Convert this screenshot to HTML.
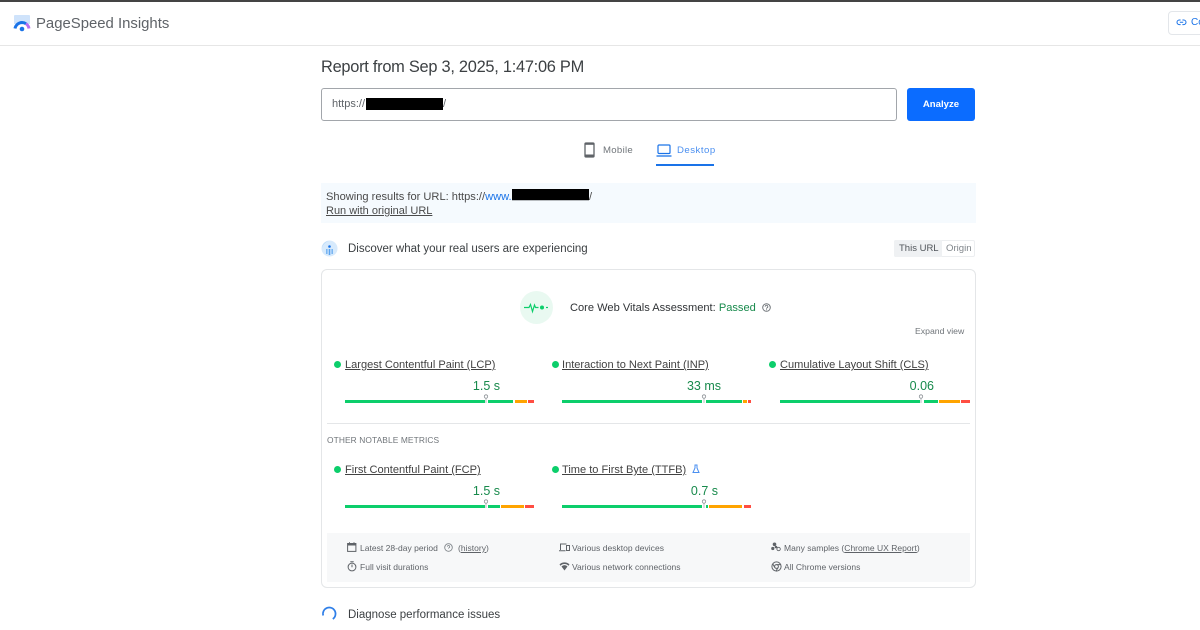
<!DOCTYPE html>
<html lang="en"><head><meta charset="utf-8"><title>PageSpeed Insights</title>
<style>
html,body{margin:0;padding:0;background:#fff;width:1200px;height:630px;overflow:hidden}
body{position:relative;font-family:"Liberation Sans",sans-serif;color:#3c4043;filter:blur(.35px)}
.a{position:absolute;white-space:nowrap}
.b{position:absolute}
.m{font-size:11.05px;line-height:14px;color:#424242;text-decoration:underline;text-underline-offset:1px}
.d{position:absolute;width:7px;height:7px;border-radius:50%;background:#0cce6b}
.v{position:absolute;font-size:12.5px;line-height:14px;color:#188a4c;white-space:nowrap;text-align:right}
.g{position:absolute;height:3px;background:#0cce6b}
.o{position:absolute;height:3px;background:#ffa400}
.r{position:absolute;height:3px;background:#ff4e42}
.f{font-size:8.5px;line-height:10px;color:#5f6368;letter-spacing:.02px}
svg{position:absolute;overflow:visible}
</style></head><body>
<div class="b" style="left:0;top:0;width:1200px;height:1.5px;background:#444"></div>
<div class="b" style="left:0;top:45px;width:1200px;height:1px;background:#e6e6e6"></div>

<svg style="left:13px;top:15px" width="18" height="17" viewBox="0 0 18 17">
<path d="M1 0h15a1 1 0 0 1 1 1v8H1V1a1 1 0 0 1 1-1z" fill="#cfe3fb"/>
<path d="M2 13.500A7.300 7.300 0 0 1 9 7.500a7.300 7.300 0 0 1 4 1.200" fill="none" stroke="#1a73e8" stroke-width="3"/>
<path d="M13 8.700a7.300 7.300 0 0 1 3 4.800" fill="none" stroke="#b76df0" stroke-width="3"/>
<circle cx="9" cy="14" r="2.300" fill="#1a73e8"/>
</svg>
<div class="a" style="left:36px;top:14px;font-size:14.9px;line-height:17px;color:#5f6368"><span style="position:relative;top:2px">PageSpeed Insights</span></div>
<div class="b" style="left:1168px;top:11px;width:40px;height:22px;border:1px solid #e3e6ea;border-radius:4px"></div>
<svg style="left:1177px;top:19px" width="9" height="7" viewBox="0 0 9 7"><path d="M3.600 1H2.300a2.300 2.300 0 0 0 0 4.600h1.300M5.400 1h1.300a2.300 2.300 0 0 1 0 4.600H5.400M2.800 3.300h3.400" fill="none" stroke="#1a73e8" stroke-width="1"/></svg>
<div class="a" style="left:1191px;top:17px;font-size:10px;line-height:12px;color:#1a73e8">Co</div>

<div class="a" style="left:321px;top:58px;font-size:16.400px;line-height:19px;letter-spacing:-.27px;color:#3c4043">Report from Sep 3, 2025, 1:47:06 PM</div>
<div class="b" style="left:321px;top:88px;width:574px;height:31px;border:1px solid #a2a6ab;border-radius:3px"></div>
<div class="a" style="left:332px;top:98px;font-size:11px;line-height:13px;color:#5f6368">https://</div>
<div class="b" style="left:366px;top:98px;width:77px;height:12px;background:#000"></div>
<div class="a" style="left:443px;top:98px;font-size:11px;line-height:13px;color:#5f6368">/</div>
<div class="b" style="left:907px;top:88px;width:68px;height:33px;background:#0b6cff;border-radius:3px"></div>
<div class="a" style="left:907px;top:99px;width:68px;text-align:center;font-size:9.600px;line-height:12px;font-weight:bold;color:#fff">Analyze</div>

<svg style="left:584px;top:142px" width="11" height="16" viewBox="0 0 11 16"><rect x="1" y="1" width="9" height="14" rx="1" fill="none" stroke="#5f6368" stroke-width="1.300"/><rect x="1" y="12.500" width="9" height="2.500" fill="#5f6368"/><rect x="1" y="1" width="9" height="1.800" fill="#5f6368"/></svg>
<div class="a" style="left:603px;top:145px;font-size:9.600px;line-height:12px;color:#70757a;letter-spacing:.3px">Mobile</div>
<svg style="left:656px;top:144px" width="16" height="13" viewBox="0 0 16 13"><rect x="2" y="1" width="12" height="8.500" rx="1" fill="none" stroke="#1a73e8" stroke-width="1.200"/><path d="M0.500 12h15" stroke="#1a73e8" stroke-width="1.300"/></svg>
<div class="a" style="left:677px;top:145px;font-size:9.600px;line-height:12px;color:#4a8ff0;letter-spacing:.5px">Desktop</div>
<div class="b" style="left:656px;top:164px;width:58px;height:2px;background:#1a73e8"></div>

<div class="b" style="left:321px;top:183px;width:655px;height:40px;background:#f5fafe"></div>
<div class="a" style="left:326px;top:190px;font-size:11.100px;line-height:14px;color:#4a4a4a">Showing results for URL: https://<span style="color:#1a73e8">www.</span></div>
<div class="b" style="left:512px;top:189px;width:77px;height:11px;background:#000"></div>
<div class="b" style="left:512px;top:200px;width:77px;height:1px;background:#b8bcc0"></div>
<div class="a" style="left:589px;top:190px;font-size:11.100px;line-height:14px;color:#4a4a4a">/</div>
<div class="a" style="left:326px;top:204px;font-size:11px;line-height:14px;color:#4a4a4a;text-decoration:underline">Run with original URL</div>

<svg style="left:321px;top:240px" width="17" height="17" viewBox="0 0 17 17"><circle cx="8.500" cy="8.500" r="8" fill="#d7eafc"/><path d="M1 8.500a7.500 7.500 0 0 1 7-7.500a9 9 0 0 0-7 7.500z" fill="#a9d0f7"/><rect x="5" y="9" width="1.600" height="5" fill="#7ab6f2"/><rect x="7.700" y="9" width="1.600" height="6" fill="#5aa3ee"/><rect x="10.400" y="9" width="1.600" height="5" fill="#7ab6f2"/><circle cx="8.500" cy="6.500" r="1.300" fill="#1a73e8"/></svg>
<div class="a" style="left:348px;top:242px;font-size:11.500px;line-height:14px;color:#3c4043">Discover what your real users are experiencing</div>

<div class="b" style="left:894px;top:240px;width:81px;height:17px;border:1px solid #eceef0;border-radius:2px;box-sizing:border-box"></div>
<div class="b" style="left:894px;top:240px;width:48px;height:17px;background:#eff1f3;border-radius:2px 0 0 2px"></div>
<div class="a" style="left:899px;top:243px;font-size:9.500px;line-height:11px;color:#50555a">This URL</div>
<div class="a" style="left:946px;top:243px;font-size:9.600px;line-height:11px;color:#80868b">Origin</div>

<div class="b" style="left:321px;top:269px;width:655px;height:319px;box-sizing:border-box;border:1px solid #e4e6e8;border-radius:6px"></div>

<div class="b" style="left:520px;top:291px;width:33px;height:33px;border-radius:50%;background:#e9f9f1"></div>
<svg style="left:524px;top:302px" width="26" height="11" viewBox="0 0 26 11"><path d="M0 5.500h5l1.500-3 2 7 2-6.500 1 2.500h3" fill="none" stroke="#0cce6b" stroke-width="1.200"/><circle cx="18" cy="5.500" r="2" fill="#0cce6b"/><path d="M22 5.500h2" stroke="#0cce6b" stroke-width="1.200"/></svg>
<div class="a" style="left:570px;top:301px;font-size:11.100px;line-height:13px;color:#303336"><span style="position:relative;top:1px">Core Web Vitals Assessment: <span style="color:#188a4c">Passed</span></span></div>
<svg style="left:762px;top:303px" width="9" height="9" viewBox="0 0 9 9"><circle cx="4.500" cy="4.500" r="3.800" fill="none" stroke="#70757a" stroke-width="1"/><path d="M3.200 3.700a1.300 1.300 0 1 1 1.900 1.100c-.5.300-.6.500-.6.900" fill="none" stroke="#70757a" stroke-width=".9"/><circle cx="4.500" cy="6.700" r=".5" fill="#70757a"/></svg>
<div class="a" style="left:915px;top:326px;font-size:8.700px;line-height:10px;color:#70757a">Expand view</div>

<!-- row 1 -->
<div class="d" style="left:334px;top:361px"></div>
<div class="a m" style="left:345px;top:358px">Largest Contentful Paint (LCP)</div>
<div class="v" style="left:400px;width:100px;top:379px">1.5 s</div>
<div class="g" style="left:345px;top:400px;width:140px"></div>
<div class="g" style="left:488px;top:400px;width:25px"></div>
<div class="o" style="left:515px;top:400px;width:11.500px"></div>
<div class="r" style="left:528px;top:400px;width:6px"></div>
<svg style="left:483px;top:394px" width="6" height="9" viewBox="0 0 6 9"><path d="M3 4v5" stroke="#c4c7c9" stroke-width="1.200"/><circle cx="3" cy="2.500" r="1.700" fill="#fff" stroke="#8a8f94" stroke-width=".8"/></svg>

<div class="d" style="left:551.500px;top:361px"></div>
<div class="a m" style="left:562px;top:358px">Interaction to Next Paint (INP)</div>
<div class="v" style="left:621px;width:100px;top:379px">33 ms</div>
<div class="g" style="left:562px;top:400px;width:140px"></div>
<div class="g" style="left:706px;top:400px;width:36px"></div>
<div class="o" style="left:743px;top:400px;width:4px"></div>
<div class="r" style="left:748px;top:400px;width:3px"></div>
<svg style="left:701px;top:394px" width="6" height="9" viewBox="0 0 6 9"><path d="M3 4v5" stroke="#c4c7c9" stroke-width="1.200"/><circle cx="3" cy="2.500" r="1.700" fill="#fff" stroke="#8a8f94" stroke-width=".8"/></svg>

<div class="d" style="left:769px;top:361px"></div>
<div class="a m" style="left:780px;top:358px">Cumulative Layout Shift (CLS)</div>
<div class="v" style="left:834px;width:100px;top:379px">0.06</div>
<div class="g" style="left:780px;top:400px;width:140px"></div>
<div class="g" style="left:924px;top:400px;width:14px"></div>
<div class="o" style="left:939px;top:400px;width:21px"></div>
<div class="r" style="left:961px;top:400px;width:9px"></div>
<svg style="left:918px;top:394px" width="6" height="9" viewBox="0 0 6 9"><path d="M3 4v5" stroke="#c4c7c9" stroke-width="1.200"/><circle cx="3" cy="2.500" r="1.700" fill="#fff" stroke="#8a8f94" stroke-width=".8"/></svg>

<div class="b" style="left:327px;top:423px;width:643px;height:1px;background:#e4e6e8"></div>
<div class="a" style="left:327px;top:435px;font-size:8.400px;line-height:10px;color:#70757a;letter-spacing:.1px">OTHER NOTABLE METRICS</div>

<!-- row 2 -->
<div class="d" style="left:334px;top:466px"></div>
<div class="a m" style="left:345px;top:463px">First Contentful Paint (FCP)</div>
<div class="v" style="left:400px;width:100px;top:484px">1.5 s</div>
<div class="g" style="left:345px;top:505px;width:140px"></div>
<div class="g" style="left:488px;top:505px;width:12px"></div>
<div class="o" style="left:501px;top:505px;width:23px"></div>
<div class="r" style="left:525px;top:505px;width:9px"></div>
<svg style="left:483px;top:499px" width="6" height="9" viewBox="0 0 6 9"><path d="M3 4v5" stroke="#c4c7c9" stroke-width="1.200"/><circle cx="3" cy="2.500" r="1.700" fill="#fff" stroke="#8a8f94" stroke-width=".8"/></svg>

<div class="d" style="left:551.500px;top:466px"></div>
<div class="a m" style="left:562px;top:463px">Time to First Byte (TTFB)</div>
<svg style="left:692px;top:464px" width="8" height="10" viewBox="0 0 8 10"><path d="M2.500 1h3M3 1v3L1 8.500h6L5 4V1" fill="none" stroke="#4a8ff0" stroke-width="1"/></svg>
<div class="v" style="left:618px;width:100px;top:484px">0.7 s</div>
<div class="g" style="left:562px;top:505px;width:140px"></div>
<div class="g" style="left:706px;top:505px;width:2px"></div>
<div class="o" style="left:709px;top:505px;width:33px"></div>
<div class="r" style="left:744px;top:505px;width:7px"></div>
<svg style="left:701px;top:499px" width="6" height="9" viewBox="0 0 6 9"><path d="M3 4v5" stroke="#c4c7c9" stroke-width="1.200"/><circle cx="3" cy="2.500" r="1.700" fill="#fff" stroke="#8a8f94" stroke-width=".8"/></svg>

<!-- footer -->
<div class="b" style="left:327px;top:533px;width:643px;height:49px;background:#f7f8f9"></div>
<svg style="left:347px;top:542px" width="10" height="10" viewBox="0 0 10 10"><rect x=".6" y="1.500" width="8.300" height="7.900" fill="none" stroke="#5f6368" stroke-width="1"/><rect x=".6" y="1.500" width="8.300" height="2" fill="#5f6368"/><path d="M2.500 .3v1.500M7 .3v1.500" stroke="#5f6368"/></svg>
<div class="a f" style="left:360px;top:543px">Latest 28-day period</div>
<svg style="left:444px;top:543px" width="9" height="9" viewBox="0 0 9 9"><circle cx="4.500" cy="4.500" r="3.800" fill="none" stroke="#80868b" stroke-width=".9"/><path d="M3.300 3.700a1.200 1.200 0 1 1 1.800 1c-.5.300-.6.500-.6.900" fill="none" stroke="#80868b" stroke-width=".8"/></svg>
<div class="a f" style="left:458px;top:543px">(<u>history</u>)</div>
<svg style="left:347px;top:561px" width="10" height="11" viewBox="0 0 10 11"><circle cx="5" cy="6" r="3.900" fill="none" stroke="#5f6368" stroke-width="1"/><path d="M3.300 .7h3.400M5 3.500V6.300" stroke="#5f6368" stroke-width="1"/></svg>
<div class="a f" style="left:360px;top:562px">Full visit durations</div>

<svg style="left:559px;top:543px" width="11" height="9" viewBox="0 0 11 9"><path d="M1.500 7V1h6M0 7.800h6.500" fill="none" stroke="#5f6368" stroke-width="1"/><rect x="7.500" y="2.500" width="3" height="5" fill="none" stroke="#5f6368" stroke-width="1"/></svg>
<div class="a f" style="left:572px;top:543px">Various desktop devices</div>
<svg style="left:559px;top:562px" width="11" height="9" viewBox="0 0 11 9"><path d="M.5 2.500a7 7 0 0 1 10 0l-1 1.200a5.500 5.500 0 0 0-8 0zM2.500 4.500a4 4 0 0 1 6 0L5.500 8.500z" fill="#5f6368"/></svg>
<div class="a f" style="left:572px;top:562px">Various network connections</div>

<svg style="left:771px;top:542px" width="10" height="10" viewBox="0 0 10 10"><circle cx="3.500" cy="2.300" r="1.800" fill="#5f6368"/><circle cx="1.800" cy="6.500" r="1.600" fill="#5f6368"/><circle cx="7.600" cy="7" r="1.700" fill="none" stroke="#5f6368" stroke-width=".9"/><circle cx="5" cy="5" r="1.300" fill="#5f6368"/></svg>
<div class="a f" style="left:784px;top:543px">Many samples (<u>Chrome UX Report</u>)</div>
<svg style="left:771px;top:561px" width="11" height="11" viewBox="0 0 11 11"><circle cx="5.500" cy="5.500" r="4.600" fill="none" stroke="#5f6368" stroke-width="1"/><circle cx="5.500" cy="5.500" r="1.900" fill="none" stroke="#5f6368" stroke-width="1"/><path d="M5.500 3.600h4.300M3.800 6.500L1.800 3M7.100 6.500L5 10" stroke="#5f6368" stroke-width="1"/></svg>
<div class="a f" style="left:784px;top:562px">All Chrome versions</div>

<svg style="left:322px;top:606px" width="15" height="15" viewBox="0 0 15 15"><path d="M1.200 9.500A6.300 6.300 0 1 1 10.800 13" fill="none" stroke="#2f7fe8" stroke-width="1.700"/></svg>
<div class="a" style="left:348px;top:608px;font-size:11.500px;line-height:14px;color:#3c4043">Diagnose performance issues</div>
</body></html>
